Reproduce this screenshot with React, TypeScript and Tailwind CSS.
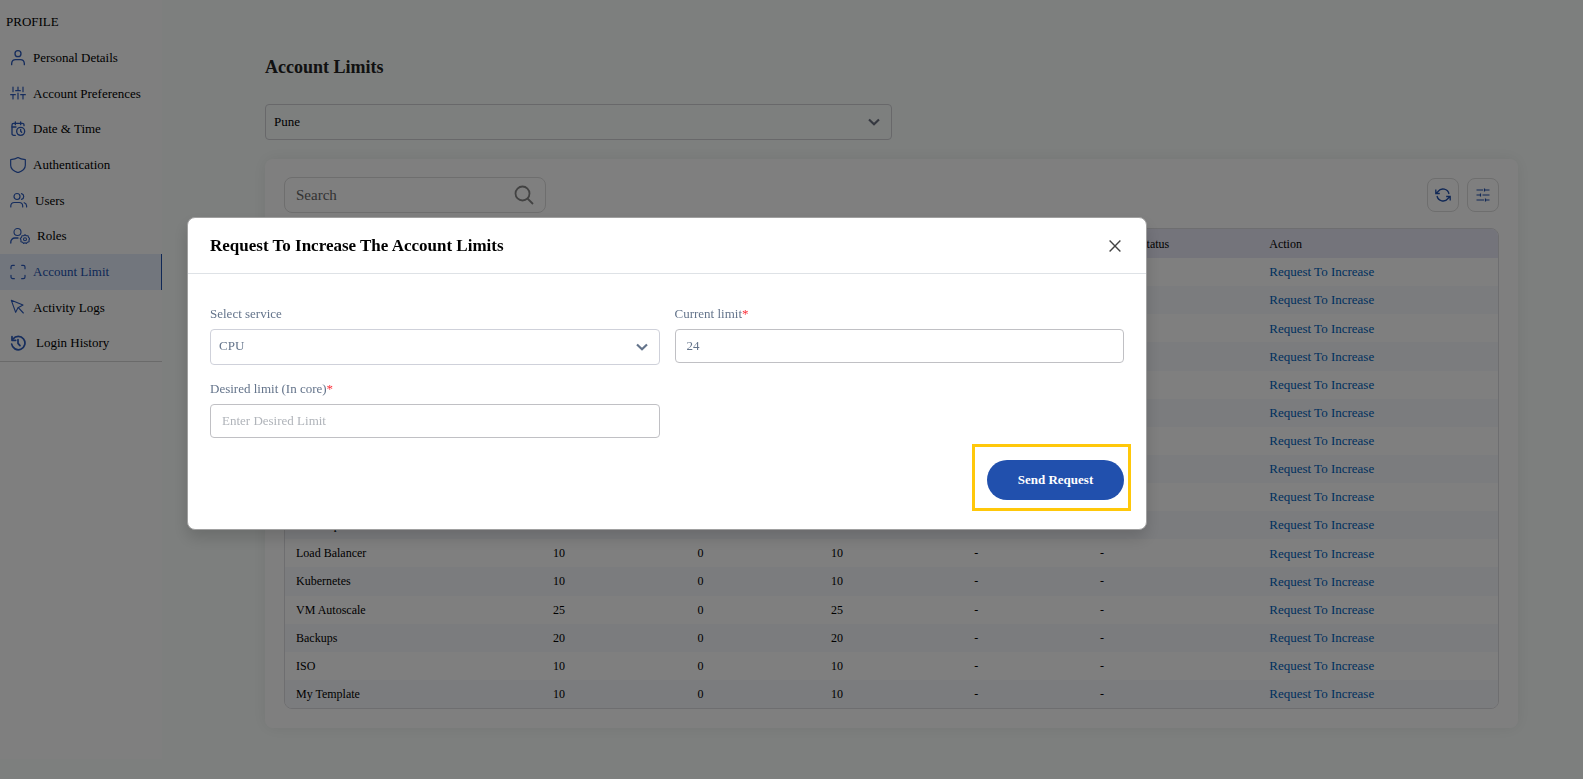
import { useState, type ReactNode } from "react";

function Icon({ children, className = "size-4", width = 1.8 }: { children: ReactNode; className?: string; width?: number }) {
  return (
    <svg
      viewBox="0 0 24 24"
      fill="none"
      stroke="currentColor"
      strokeWidth={width}
      strokeLinecap="round"
      strokeLinejoin="round"
      className={`shrink-0 ${className}`}
      aria-hidden="true"
    >
      {children}
    </svg>
  );
}

const UserIcon = () => (
  <Icon width={2}>
    <circle cx="12" cy="5.500" r="4.500" />
    <path d="M2.500 22v-2a6 6 0 0 1 6-5.500h7a6 6 0 0 1 6 5.500v2" />
  </Icon>
);

const SlidersIcon = () => (
  <Icon width={1.800}>
    <path d="M4.500 3v7M4.500 14.500V21M1 14.500h7M12 3v5M12 12v9M8.500 8.500h7M19.500 3v7M19.500 14.500V21M16 14.500h7" />
  </Icon>
);

const CalendarClockIcon = () => (
  <Icon width={2}>
    <path d="M8 1.500v4M16 1.500v4M2.500 9H9M21 7V6a2.500 2.500 0 0 0-2.500-2.500h-13A2.500 2.500 0 0 0 3 6v13a2.500 2.500 0 0 0 2.500 2.500H8" />
    <circle cx="16" cy="15.500" r="6" />
    <path d="M16 12.500v3l1.500 1.500" />
  </Icon>
);

const ShieldIcon = () => (
  <Icon width={1.800}>
    <path d="M12 .8c3 2 6.500 2.800 11 3v8.500c0 5.500-4.500 9-11 11.200C5.500 21.300 1 17.800 1 12.300V3.800c4.500-.2 8-1 11-3z" />
  </Icon>
);

const UsersIcon = () => (
  <svg viewBox="0 0 18 16" fill="none" stroke="currentColor" strokeWidth="1.200" strokeLinecap="round" strokeLinejoin="round" className="h-4 w-[18px] shrink-0" aria-hidden="true">
    <circle cx="7" cy="4.500" r="3" />
    <path d="M.8 15v-1.200a3.500 3.500 0 0 1 3.500-3.300h4.900a3.500 3.500 0 0 1 3.500 3.300V15M11.500 1.600a3 3 0 0 1 0 5.800M14.200 10.700a3.500 3.500 0 0 1 2.400 3.100V15" />
  </svg>
);

const RolesIcon = () => (
  <svg viewBox="0 0 20 18" fill="none" stroke="currentColor" strokeWidth="1.100" strokeLinecap="round" strokeLinejoin="round" className="h-[18px] w-5 shrink-0" aria-hidden="true">
    <circle cx="7.500" cy="5" r="3.500" />
    <path d="M.8 16v-1a4 4 0 0 1 4-4H8" strokeWidth="1.300" />
    <circle cx="15" cy="12.300" r="1.500" />
    <path d="M15 7.800l1.300 1 1.700-.1.500 1.600 1.200 1.200-.7 1.500.1 1.700-1.700.5-1 1.300-1.400-.7-1.400.7-1-1.300-1.700-.5.1-1.700-.7-1.500 1.200-1.200.5-1.600 1.700.1z" />
  </svg>
);

const FrameIcon = () => (
  <Icon width={1.800}>
    <path d="M1.500 7V4.500A2.500 2.500 0 0 1 4 2h2.500M17.500 2H20a2.500 2.500 0 0 1 2.500 2.500V7M22.500 17v2.500A2.500 2.500 0 0 1 20 22h-2.500M6.500 22H4a2.500 2.500 0 0 1-2.500-2.500V17" />
  </Icon>
);

const CursorIcon = () => (
  <Icon width={1.700}>
    <path d="M2 2l6.500 18 3.500-7 7.500-4z" />
    <path d="M12.500 13l7.500 8" />
  </Icon>
);

const HistoryIcon = () => (
  <Icon width={2.600}>
    <path d="M4.500 6A10 10 0 1 1 2.500 13.500" />
    <path d="M3 2.500v5.500h5.500" />
    <path d="M12 7v5.500l3 3.500" />
  </Icon>
);

const ChevronIcon = () => (
  <svg viewBox="0 0 12 8" fill="none" stroke="currentColor" strokeWidth="2.200" className="pointer-events-none absolute right-3 top-1/2 h-2 w-3 -translate-y-1/2" aria-hidden="true">
    <path d="M1 1.500l5 4.700 5-4.700" />
  </svg>
);

const navItems = [
  { label: "Personal Details", icon: <UserIcon />, gap: "gap-[7px]" },
  { label: "Account Preferences", icon: <SlidersIcon />, gap: "gap-[7px]" },
  { label: "Date & Time", icon: <CalendarClockIcon />, gap: "gap-[7px]" },
  { label: "Authentication", icon: <ShieldIcon />, gap: "gap-[7px]" },
  { label: "Users", icon: <UsersIcon />, gap: "gap-[7px]" },
  { label: "Roles", icon: <RolesIcon />, gap: "gap-[7px]" },
  { label: "Account Limit", icon: <FrameIcon />, gap: "gap-[7px]", active: true },
  { label: "Activity Logs", icon: <CursorIcon />, gap: "gap-[7px]" },
  { label: "Login History", icon: <HistoryIcon />, gap: "gap-[10px]" },
];

const limits: [string, number, number][] = [
  ["CPU", 24, 0],
  ["Memory", 48, 0],
  ["Instance", 10, 0],
  ["Volume", 10, 0],
  ["Snapshot", 10, 0],
  ["Network", 10, 0],
  ["Router", 10, 0],
  ["Firewall", 10, 0],
  ["VPC", 10, 0],
  ["Public Ip", 10, 0],
  ["Load Balancer", 10, 0],
  ["Kubernetes", 10, 0],
  ["VM Autoscale", 25, 0],
  ["Backups", 20, 0],
  ["ISO", 10, 0],
  ["My Template", 10, 0],
];

function Sidebar() {
  return (
    <aside className="mb-5 w-[162px] shrink-0 bg-white">
      <h2 className="px-1.5 pt-3 text-[13px] leading-5">PROFILE</h2>
      <nav className="mt-2 border-b border-[#d4d4d4]">
        <ul className="grid min-h-[321px] auto-rows-fr">
          {navItems.map((item) => (
            <li key={item.label} className="flex">
              <a
                href="#"
                className={`flex flex-1 items-center pl-[10px] text-[13px] ${item.gap} ${
                  item.active ? "border-r border-[#2150ad] bg-[#e4ecfb] text-[#2150ad]" : "text-black"
                }`}
              >
                <span className="text-[#2c5abb]">{item.icon}</span>
                {item.label}
              </a>
            </li>
          ))}
        </ul>
      </nav>
    </aside>
  );
}

function LimitsTable() {
  return (
    <div className="mt-[15px] overflow-hidden rounded-lg border border-[#dcdce0]">
      <table className="h-[479px] w-full table-fixed text-center text-[12px]">
        <colgroup>
          <col className="w-[15.5%]" />
          <col className="w-[14.2%]" />
          <col className="w-[9.1%]" />
          <col className="w-[13.4%]" />
          <col className="w-[9.6%]" />
          <col className="w-[11.1%]" />
          <col />
        </colgroup>
        <thead>
          <tr className="h-[29px] bg-[#e8e8f7]">
            <th className="pl-[11px] text-left font-normal">Service</th>
            <th className="font-normal">Current Limit</th>
            <th className="font-normal">Used</th>
            <th className="font-normal">Available</th>
            <th className="font-normal">Requested</th>
            <th className="text-right font-normal">Request Status</th>
            <th className="pl-[100px] text-left font-normal">Action</th>
          </tr>
        </thead>
        <tbody>
          {limits.map(([name, limit, used]) => (
            <tr key={name} className="even:bg-[#f7f9fc]">
              <td className="pl-[11px] text-left">{name}</td>
              <td>{limit}</td>
              <td>{used}</td>
              <td>{limit - used}</td>
              <td>-</td>
              <td>-</td>
              <td className="pl-[100px] text-left">
                <a href="#" className="text-[13px] text-[#0062bd]">Request To Increase</a>
              </td>
            </tr>
          ))}
        </tbody>
      </table>
    </div>
  );
}

function RequestModal({ onClose }: { onClose: () => void }) {
  const label = "mb-[7px] block text-[13px] leading-4 text-[#64748b]";
  return (
    <div className="fixed inset-0 bg-black/50 pl-[187px] pt-[217px]">
      <div role="dialog" aria-modal="true" aria-labelledby="modal-title" className="w-full max-w-[960px] rounded-lg border border-[#a0a0a0] bg-white shadow-[0_8px_16px_rgba(0,0,0,0.150)]">
        <header className="flex h-[56px] items-center justify-between border-b border-[#dee2e6] pl-[22px] pr-[25px]">
          <h2 id="modal-title" className="text-[17px] font-bold text-black">Request To Increase The Account Limits</h2>
          <button type="button" aria-label="Close" onClick={onClose} className="text-[#444]">
            <svg viewBox="0 0 12 12" fill="none" stroke="currentColor" strokeWidth="1.400" className="size-3" aria-hidden="true">
              <path d="M.6.6l10.800 10.800M11.400.6L.6 11.400" />
            </svg>
          </button>
        </header>
        <form className="px-[22px] pb-[29px] pt-8" onSubmit={(e) => e.preventDefault()}>
          <div className="grid grid-cols-2 gap-x-[15px] gap-y-4">
            <div>
              <label htmlFor="service" className={label}>Select service</label>
              <div className="relative text-[#64748b]">
                <select id="service" defaultValue="CPU" className="h-9 w-full appearance-none rounded border border-[#cfd1da] bg-white px-2 pb-[2px] text-[13px]">
                  {limits.map(([name]) => <option key={name}>{name}</option>)}
                </select>
                <ChevronIcon />
              </div>
            </div>
            <div>
              <label htmlFor="current" className={label}>Current limit<span className="text-red-500">*</span></label>
              <input id="current" defaultValue="24" className="h-[34px] w-full rounded border border-[#c0c0c4] px-[11px] text-[13px] text-[#64748b]" />
            </div>
            <div>
              <label htmlFor="desired" className={label}>Desired limit (In core)<span className="text-red-500">*</span></label>
              <input id="desired" placeholder="Enter Desired Limit" className="h-[34px] w-full rounded border border-[#c0c0c4] px-[11px] text-[13px] placeholder:text-[#b0b4ba]" />
            </div>
          </div>
          <div className="mt-[22px] flex justify-end">
            <div className="relative">
              <button type="submit" className="h-10 w-[137px] rounded-full bg-[#2150ad] text-[13px] font-bold text-white">Send Request</button>
              <span className="pointer-events-none absolute -bottom-[11px] -left-[15px] -right-[7px] -top-4 border-3 border-[#ffc80a]" />
            </div>
          </div>
        </form>
      </div>
    </div>
  );
}

export default function App() {
  const [open, setOpen] = useState(true);
  const toolButton = "flex h-[34px] w-8 items-center justify-center rounded-lg border border-[#dcdcdc] text-[#2150ad]";
  return (
    <div className="flex min-h-screen bg-[#fbfffd] font-['Liberation_Serif',serif] text-black">
      <Sidebar />
      <main className="min-w-0 flex-1 pb-12 pl-[103px] pr-[65px] pt-[55px]">
        <h1 className="text-[18px] font-bold leading-6 text-[#222]">Account Limits</h1>
        <div className="relative mt-[25px] w-1/2 text-[#6b7080]">
          <select aria-label="Location" defaultValue="Pune" className="h-9 w-full appearance-none rounded border border-[#d0d0d4] bg-transparent px-2 text-[13px] text-black">
            <option>Pune</option>
          </select>
          <ChevronIcon />
        </div>
        <section className="mt-[19px] rounded-lg bg-white px-[19px] pb-[19px] pt-[18px] shadow-[0_0_16px_rgba(0,0,0,0.080)]">
          <div className="flex items-center justify-between">
            <div className="relative w-[262px]">
              <input aria-label="Search" placeholder="Search" className="h-9 w-full rounded-lg border border-[#dcdcdc] bg-transparent pl-[11px] pr-10 text-[15px] placeholder:text-[#666]" />
              <svg viewBox="0 0 20 20" fill="none" stroke="#858585" strokeWidth="1.800" className="pointer-events-none absolute right-3 top-2 size-5" aria-hidden="true">
                <circle cx="8.500" cy="8.500" r="7" />
                <path d="M13.500 13.500l5.500 5.500" />
              </svg>
            </div>
            <div className="flex gap-2">
              <button type="button" aria-label="Refresh" className={toolButton}>
                <svg viewBox="0 0 16 14" fill="none" stroke="currentColor" strokeWidth="1.300" className="h-3.5 w-4" aria-hidden="true">
                  <path d="M.8 1.500v4h4M15.200 12.500v-4h-4M14 6A6.200 6.200 0 0 0 3 3.500L.8 5.500M15.200 8.500L13 10.500A6.200 6.200 0 0 1 2 8" />
                </svg>
              </button>
              <button type="button" aria-label="Filters" className={toolButton}>
                <svg viewBox="0 0 14 14" fill="none" stroke="currentColor" strokeWidth="1.200" className="size-3.5" aria-hidden="true">
                  <path d="M.5 2H7M8.500.5v3M8.500 2h5M.5 7h4M4.500 5.500v3M6.500 7h7M.5 12H8M9.500 10.500v3M9.500 12h4" />
                </svg>
              </button>
            </div>
          </div>
          <LimitsTable />
        </section>
      </main>
      {open && <RequestModal onClose={() => setOpen(false)} />}
    </div>
  );
}
